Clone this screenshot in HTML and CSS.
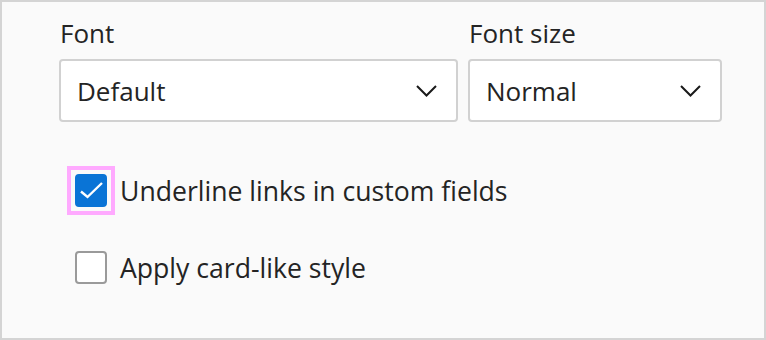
FILE: index.html
```html
<!DOCTYPE html>
<html>
<head>
<meta charset="utf-8">
<link rel="stylesheet" href="styles.css">
</head>
<body>
<div class="panel">
  <div class="fields">
    <div class="field field-font">
      <div class="label">Font</div>
      <div class="select">
        <span class="value">Default</span>
        <svg class="chev" width="21" height="12" viewBox="0 0 21 12"><polyline points="1,1 10.5,10.5 20,1" fill="none" stroke="#1a1a1a" stroke-width="2"/></svg>
      </div>
    </div>
    <div class="field field-size">
      <div class="label">Font size</div>
      <div class="select">
        <span class="value">Normal</span>
        <svg class="chev" width="21" height="12" viewBox="0 0 21 12"><polyline points="1,1 10.5,10.5 20,1" fill="none" stroke="#1a1a1a" stroke-width="2"/></svg>
      </div>
    </div>
  </div>
  <div class="checks">
    <div class="check-row">
      <span class="ring focused">
        <span class="box checked">
          <svg width="32" height="33" viewBox="0 0 32 33"><polyline points="6,17.5 12.5,23 27,9" fill="none" stroke="#fff" stroke-width="2.4"/></svg>
        </span>
      </span>
      <span class="check-label">Underline links in custom fields</span>
    </div>
    <div class="check-row">
      <span class="ring">
        <span class="box"></span>
      </span>
      <span class="check-label">Apply card-like style</span>
    </div>
  </div>
</div>
</body>
</html>
```

FILE: styles.css
```css
html, body {
  margin: 0;
  padding: 0;
  background: #fafafa;
}
body {
  font-family: "Open Sans", "Noto Sans", sans-serif;
  color: #242424;
}
.panel {
  width: 766px;
  height: 340px;
  box-sizing: border-box;
  border: 2px solid #d4d4d4;
  padding: 14px 0 0 57px;
  background: #fafafa;
}
.fields {
  display: flex;
  gap: 10px;
}
.field-font { width: 399px; }
.field-size { width: 254px; }
.label {
  font-size: 26px;
  line-height: 34px;
  height: 34px;
  margin-bottom: 9px;
  padding-left: 1px;
}
.select {
  box-sizing: border-box;
  height: 63px;
  background: #fff;
  border: 2px solid #d1d1d1;
  border-radius: 4px;
  display: flex;
  align-items: center;
  justify-content: space-between;
  padding: 0 19px 0 16px;
}
.value {
  font-size: 26px;
  line-height: 30px;
}
.chev { display: block; margin-top: 1px; }
.checks {
  padding: 44px 0 0 8px;
  display: flex;
  flex-direction: column;
  gap: 28px;
}
.check-row {
  display: flex;
  align-items: center;
  gap: 5px;
}
.ring {
  display: block;
  border: 4px solid transparent;
  padding: 4px;
}
.ring.focused {
  border-color: #ffaaff;
}
.box {
  box-sizing: border-box;
  width: 32px;
  height: 33px;
  border: 2px solid #9a9a9a;
  border-radius: 4px;
  background: #fff;
  display: block;
}
.box.checked {
  background: #0a74d6;
  border-color: #0a74d6;
  position: relative;
}
.box.checked svg {
  position: absolute;
  left: -2px;
  top: -2px;
}
.check-label {
  font-size: 26.6px;
  line-height: 30px;
}
```
